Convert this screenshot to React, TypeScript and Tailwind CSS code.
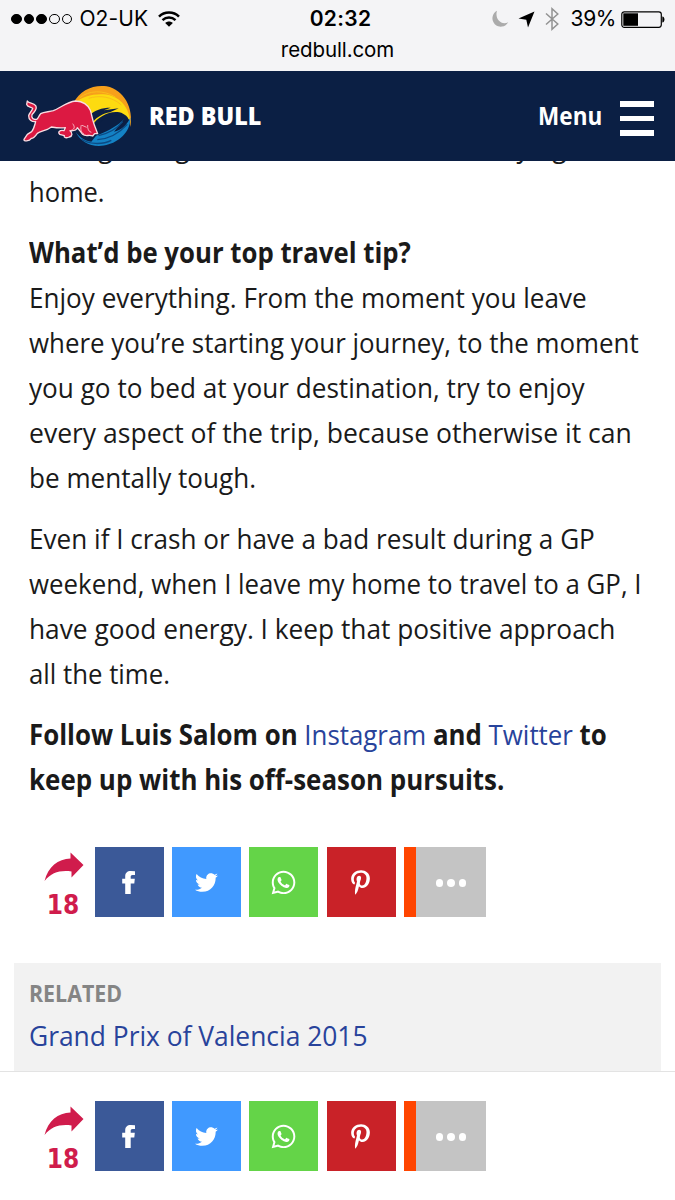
import type { ReactNode } from "react";
import clsx from "clsx";
import { FaPinterestP, FaTwitter, FaWhatsapp } from "react-icons/fa";

const SIGNAL_DOTS = [true, true, true, false, false];

function StatusBar() {
  return (
    <div className="h-[71px] bg-[#f4f4f6] pt-[5px] font-['Inter',sans-serif] text-[21px] leading-7 text-black">
      <div className="grid h-7 grid-cols-[1fr_auto_1fr] items-center">
        <div className="flex items-center pl-[11px]">
          <div className="flex gap-[2px]">
            {SIGNAL_DOTS.map((filled, i) => (
              <span
                key={i}
                className={clsx("size-[10.7px] rounded-full border border-black", filled && "bg-black")}
              />
            ))}
          </div>
          <span className="ml-[7px] tracking-[0.1px]">O2-UK</span>
          <svg viewBox="0 0 22 16" className="ml-[10px] h-4 w-[22px]" fill="none" stroke="black" strokeWidth="2.5">
            <path d="M1 5.6C6.500 .1 15.500 .1 21 5.600" />
            <path d="M4.500 9.200C8.200 5.700 13.800 5.700 17.500 9.200" />
            <path d="M11 15.800L7.200 12C9.300 10 12.700 10 14.800 12Z" fill="black" stroke="none" />
          </svg>
        </div>
        <span className="ml-[6px] font-semibold tracking-[0.3px]">02:32</span>
        <div className="flex items-center justify-end pr-[10px]">
          <svg viewBox="0 0 18 18" className="size-[18px]" fill="#ababab">
            <path d="M6 .8A8.400 8.400 0 1 0 17.200 12.300C10 15.500 3.500 9 6 .8Z" />
          </svg>
          <svg viewBox="0 0 17 17" className="ml-[9px] size-[17px]">
            <path d="M16.500 .5L10 16.500L8.300 8.700L.5 7.500Z" />
          </svg>
          <svg viewBox="0 0 14 24" className="ml-[10px] h-6 w-[14px]" fill="none" stroke="#929292" strokeWidth="1.5">
            <path d="M1 6.500L12.800 17L7 22.300V1.700L12.800 7L1 17.500" />
          </svg>
          <span className="ml-[12px] tracking-[-0.4px]">39%</span>
          <svg viewBox="0 0 44 17" className="ml-[5px] h-[17px] w-[44px]">
            <rect x=".8" y=".8" width="39.500" height="15.500" rx="2.500" fill="none" stroke="black" strokeWidth="1.200" />
            <rect x="2.300" y="2.300" width="14.700" height="12.500" />
            <path d="M41.300 5.500C44.200 5.500 44.200 11.500 41.300 11.500Z" />
          </svg>
        </div>
      </div>
      <div className="mt-[3px] text-center text-[20.5px] tracking-[-0.1px]">redbull.com</div>
    </div>
  );
}

function BullLogo() {
  return (
    <svg viewBox="0 0 360 210" className="h-[70px] w-[120px]">
      {/* Sun disc */}
      <path d="M160 66C180 28 220 10 260 16C312 26 342 82 331 138C328 104 314 78 290 66L180 84Z" fill="#f7a01b" />
      <path d="M164 66C190 42 240 34 274 44C308 56 328 84 331 126C326 108 314 98 298 94C270 88 232 108 216 134L204 84Z" fill="#fddb10" />
      <path d="M210 102C222 88 246 80 272 80L252 88L296 82L270 94C248 98 232 108 219 122Z" fill="#0b1f44" />
      <path d="M226 136C246 114 276 100 306 104C322 108 326 120 322 130L280 152L228 164Z" fill="#0b1f44" />
      <path d="M166 150C180 186 224 204 266 190C304 178 332 148 331 110C318 136 304 146 282 152L312 114C296 132 270 148 228 164L214 182C194 180 176 168 166 150Z" fill="#1482c5" />
      <path d="M232 176C264 174 296 158 322 130M236 164C270 156 292 142 308 122M184 174C206 190 246 192 274 178" fill="none" stroke="#0c4a83" strokeWidth="4" />
      <path d="M180 50C206 28 250 26 286 48M206 52C236 42 276 46 304 72" fill="none" stroke="#fbbd1a" strokeWidth="3" />
      {/* Bull */}
      <path
        d="M22 60C26 68 40 65 47 74C54 86 42 92 36 101C33 111 40 117 50 115C55 113 56 104 62 98C72 92 86 93 100 89C124 80 138 63 167 60C190 61 205 74 211 88C215 100 217 116 223 132L233 158L224 158L218 165C208 160 196 168 188 160C182 153 178 146 172 140C170 147 160 150 150 149C158 156 158 165 148 168C140 172 130 170 133 164L119 160C112 153 120 146 132 149L136 140C120 142 106 140 94 138C82 148 64 150 52 157C46 166 42 172 34 172C28 181 10 182 12 175L22 160L35 152C42 144 44 132 47 122C34 123 26 116 26 104C28 96 36 90 38 82C34 77 22 79 20 70Z"
        fill="#dc1942"
        stroke="#f9dce2"
        strokeWidth="4"
        strokeLinejoin="round"
      />
      <path
        d="M184 132C180 145 184 154 192 160M203 132C202 144 206 152 214 154M186 133L200 139M158 128C166 138 164 146 150 149"
        fill="none"
        stroke="#f7c9d1"
        strokeWidth="2.500"
      />
    </svg>
  );
}

function Header() {
  return (
    <header className="relative flex h-[90px] items-center bg-[#0b1f44] pr-[21px] pl-5 text-[25px] text-white">
      <BullLogo />
      <span className="ml-[9px] origin-left scale-x-[0.933] font-extrabold">RED BULL</span>
      <span className="ml-auto origin-right scale-x-[0.9] font-bold">Menu</span>
      <div className="ml-[18px] flex flex-col gap-[9px] pt-[5px]">
        <span className="h-[5.700px] w-[34px] bg-white" />
        <span className="h-[5.700px] w-[34px] bg-white" />
        <span className="h-[5.700px] w-[34px] bg-white" />
      </div>
    </header>
  );
}

function ShareButton({ className, children }: { className: string; children: ReactNode }) {
  return (
    <button className={clsx("flex h-[70px] w-[69px] items-center justify-center text-white", className)}>
      {children}
    </button>
  );
}

function ShareBar({ count }: { count: number }) {
  return (
    <div className="flex gap-[8.300px] pl-[44.500px]">
      <div className="flex w-[42px] flex-col items-center pt-[5px]">
        <svg viewBox="0 0 40 30" className="mr-[3px] h-[30px] w-10" fill="#d01c4c">
          <path d="M.5 29C4 14.500 14 7 26.500 6.500V.5L39.500 13L27.500 25.500V19.500C16 18 7.500 20.500 .5 29Z" />
        </svg>
        <span className="mt-[11px] mr-[5px] font-['DejaVu_Sans_Condensed','DejaVu_Sans',sans-serif] text-[26px] leading-6 font-bold text-[#d01c4c] [font-stretch:75%]">
          {count}
        </span>
      </div>
      <ShareButton className="bg-[#3b5998]">
        <svg viewBox="0 0 13 23" className="mr-[2px] h-[23px] w-[13px]" fill="currentColor">
          <path d="M13 .2V4H10.600C9.100 4 8.700 4.700 8.700 5.900V7.800H12.800L12.300 12.400H8.700V23H3.200V12.400H.2V7.800H3.200V5.500C3.200 1.900 5.200 0 8.800 0Z" />
        </svg>
      </ShareButton>
      <ShareButton className="bg-[#4099ff]">
        <FaTwitter className="size-[23px]" />
      </ShareButton>
      <ShareButton className="bg-[#64d448]">
        <FaWhatsapp className="size-[27px]" />
      </ShareButton>
      <ShareButton className="bg-[#c92228]">
        <FaPinterestP className="mr-[2px] size-[25px]" />
      </ShareButton>
      <div className="flex">
        <span className="w-3 bg-[#ff4500]" />
        <button className="flex h-[70px] w-[70px] items-center justify-center gap-1 bg-[#c4c4c4] pt-[2px]">
          <span className="size-[7.500px] rounded-full bg-white" />
          <span className="size-[7.500px] rounded-full bg-white" />
          <span className="size-[7.500px] rounded-full bg-white" />
        </button>
      </div>
    </div>
  );
}

// One slightly condensed line of body copy
function Line({ className = "scale-x-[0.932]", children }: { className?: string; children: ReactNode }) {
  return <span className={clsx("block w-fit origin-left", className)}>{children}</span>;
}

function TextLink({ children }: { children: ReactNode }) {
  return (
    <a href="#" className="font-normal text-[#28439b]">
      {children}
    </a>
  );
}

function Article() {
  return (
    <article className="-mt-[37px] space-y-4 pl-[29px] text-[28px] leading-[45px] whitespace-nowrap text-[#1a1a1a]">
      <p>
        <Line>Having riding to think about whenever flying</Line>
        <Line className="scale-x-[0.91]">home.</Line>
      </p>
      <p>
        <Line className="scale-x-[0.92] font-bold">What’d be your top travel tip?</Line>
        <Line>Enjoy everything. From the moment you leave</Line>
        <Line className="scale-x-[0.924]">where you’re starting your journey, to the moment</Line>
        <Line className="scale-x-[0.934]">you go to bed at your destination, try to enjoy</Line>
        <Line className="scale-x-[0.947]">every aspect of the trip, because otherwise it can</Line>
        <Line>be mentally tough.</Line>
      </p>
      <p>
        <Line className="scale-x-[0.933]">Even if I crash or have a bad result during a GP</Line>
        <Line className="scale-x-[0.923]">weekend, when I leave my home to travel to a GP, I</Line>
        <Line className="scale-x-[0.938]">have good energy. I keep that positive approach</Line>
        <Line className="scale-x-[0.92]">all the time.</Line>
      </p>
      <p className="font-bold">
        <Line className="scale-x-[0.923]">
          Follow Luis Salom on <TextLink>Instagram</TextLink> and <TextLink>Twitter</TextLink> to
        </Line>
        <Line className="scale-x-[0.926]">keep up with his off-season pursuits.</Line>
      </p>
    </article>
  );
}

export default function App() {
  return (
    <div className="flex h-[1200px] w-[675px] flex-col overflow-hidden bg-white font-['Open_Sans','Noto_Sans',sans-serif]">
      <div className="relative z-10">
        <StatusBar />
        <Header />
      </div>
      <main className="h-[910px] overflow-hidden">
        <Article />
        <div className="mt-[45px]">
          <ShareBar count={18} />
        </div>
        <section className="mx-[14px] mt-[46px] h-[120px] bg-[#f2f2f2] px-[15px] pt-[15px]">
          <h2 className="w-fit origin-left scale-x-[0.93] text-[23px] leading-[30px] font-bold text-[#858585]">RELATED</h2>
          <a href="#" className="mt-[5px] block w-fit origin-left scale-x-[0.942] text-[28px] leading-[45px] text-[#28439b]">
            Grand Prix of Valencia 2015
          </a>
        </section>
      </main>
      <footer className="flex-1 border-t border-[#e3e3e3] bg-white pt-[29px]">
        <ShareBar count={18} />
      </footer>
    </div>
  );
}
